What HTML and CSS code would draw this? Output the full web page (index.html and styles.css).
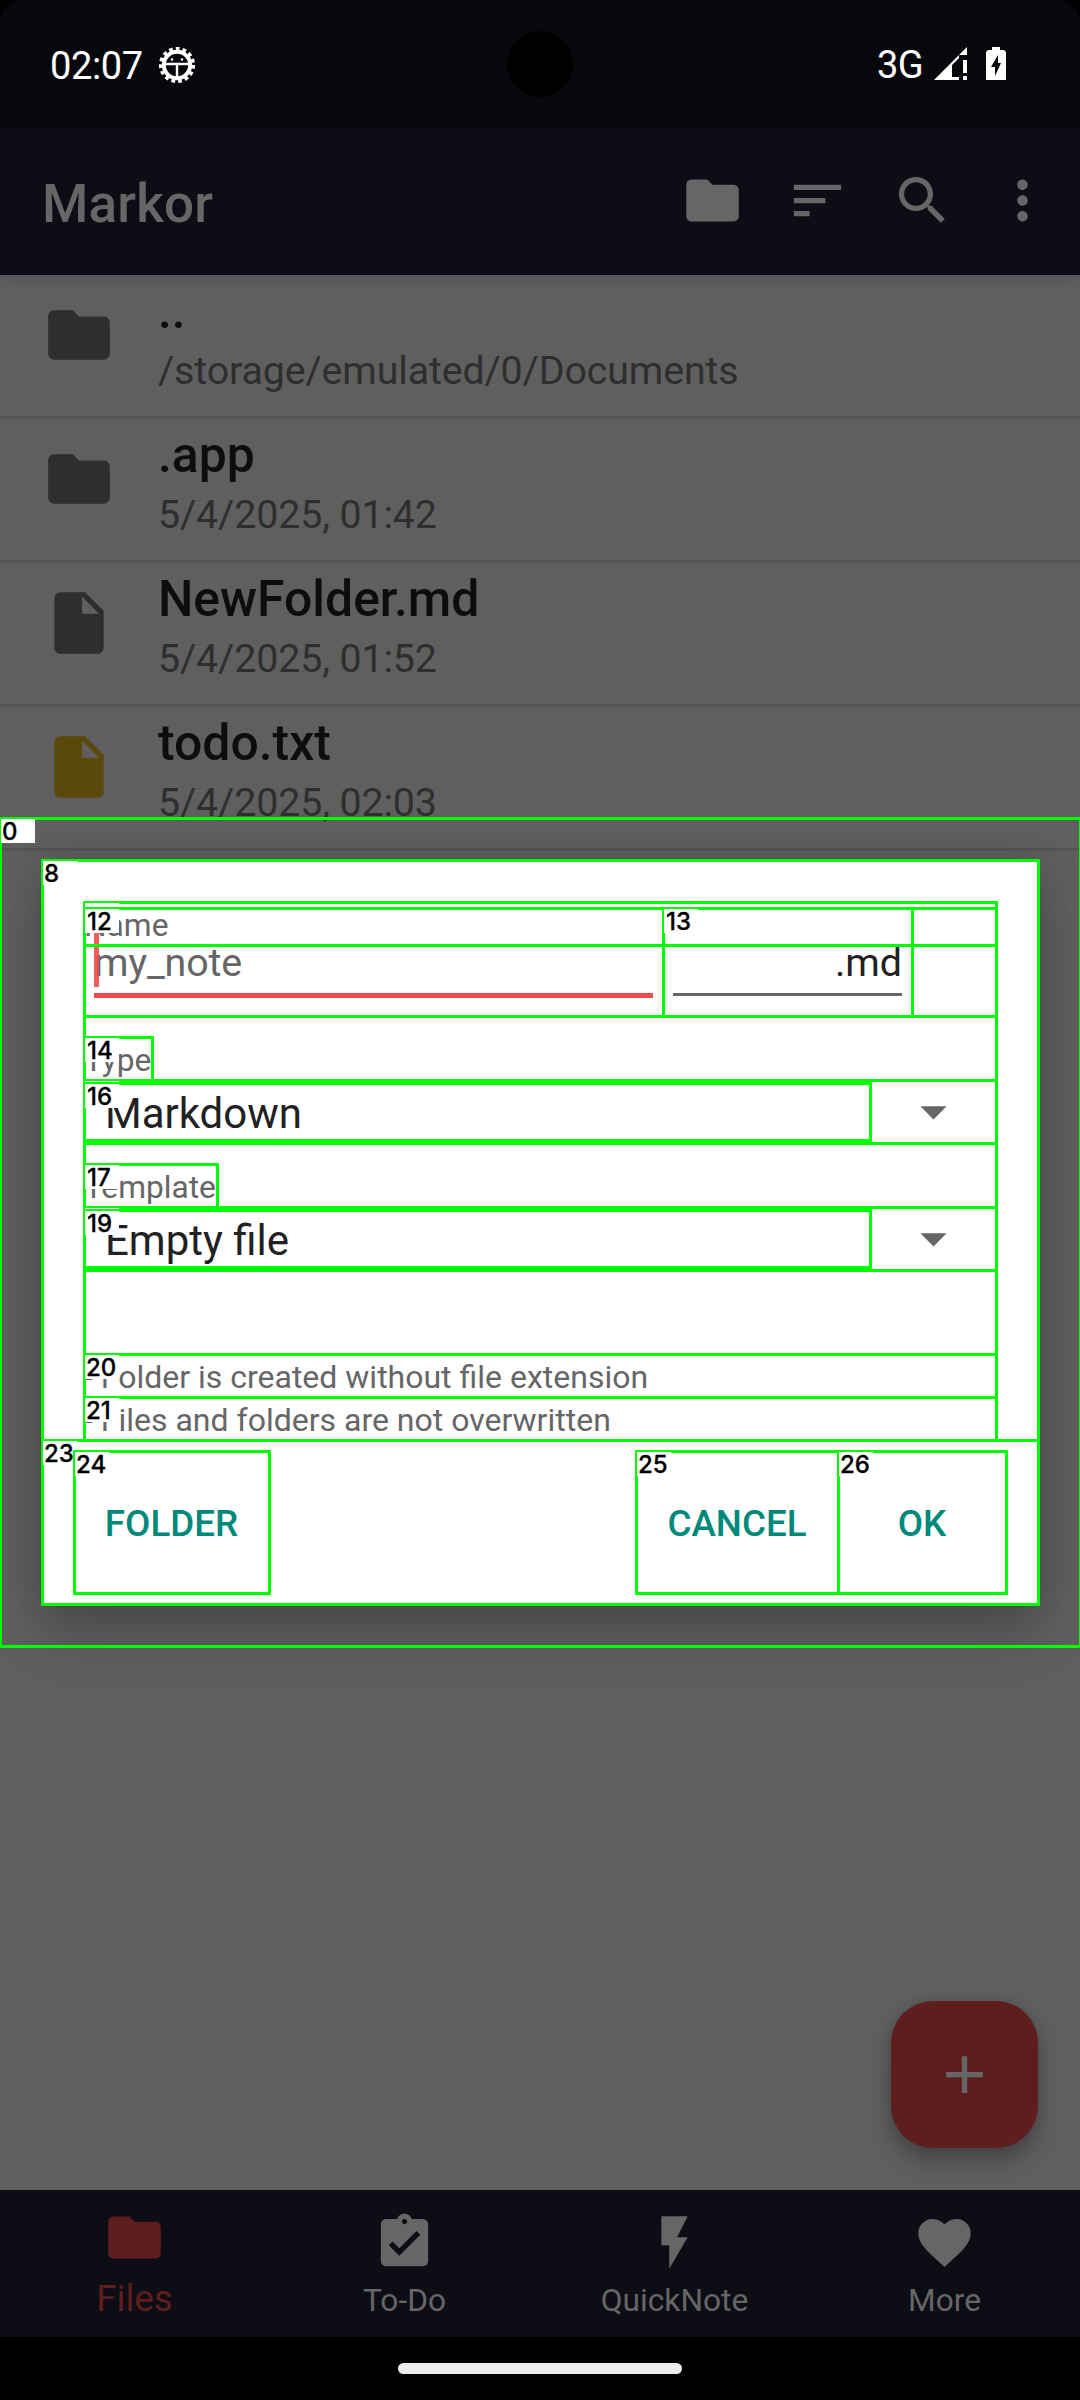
FILE: index.html
```html
<!DOCTYPE html>
<html lang="en">
<head>
<meta charset="utf-8">
<title>Markor</title>
<link rel="stylesheet" href="styles.css">
</head>
<body>
<div class="screen">
  <header class="status">
    <div class="status-left">
      <span class="clock">02:07</span>
      <svg class="bug" viewBox="-19 -19 38 38">
        <circle r="15.6" fill="none" stroke="#fff" stroke-width="5" stroke-dasharray="3.6 2.934"/>
        <circle r="13.2" fill="#07080c" stroke="#fff" stroke-width="4"/>
        <path d="M-12 -1H12M0 -1V12" stroke="#fff" stroke-width="2.400"/>
        <circle cx="-5" cy="-5.500" r="1.200" fill="#fff"/><circle cx="5" cy="-5.500" r="1.200" fill="#fff"/>
      </svg>
    </div>
    <span class="camera"></span>
    <div class="status-right">
      <span class="net">3G</span>
      <svg class="signal" viewBox="0 0 33 33" fill="#fff"><path d="M33 0V8H25ZM25 8V11L18 18V30H25V33H0ZM29 13H33V26H29ZM29 29H33V33H29Z"/></svg>
      <svg class="battery" viewBox="0 0 20 33" fill="#fff"><path fill-rule="evenodd" d="M6 0H14V3H18L20 5V33H0V5L2 3H6ZM12 8L5 20H9V29L15 16H12Z"/></svg>
    </div>
  </header>
  <div class="appbar">
    <h1 class="title">Markor</h1>
    <div class="actions">
      <svg class="icon" viewBox="0 0 24 24"><path d="M10 4H4c-1.1 0-2 .9-2 2v12c0 1.1.9 2 2 2h16c1.1 0 2-.9 2-2V8c0-1.100-.9-2-2-2h-8l-2-2z"/></svg>
      <svg class="icon" viewBox="0 0 24 24"><path d="M3 18h6v-2H3v2zM3 6v2h18V6H3zm0 7h12v-2H3v2z"/></svg>
      <svg class="icon" viewBox="0 0 24 24"><path d="M15.500 14h-.79l-.28-.27A6.471 6.471 0 0 0 16 9.500 6.500 6.500 0 1 0 9.500 16c1.610 0 3.090-.59 4.230-1.570l.27.28v.79l5 4.990L20.490 19l-4.990-5zm-6 0C7.010 14 5 11.990 5 9.500S7.010 5 9.500 5 14 7.010 14 9.500 11.990 14 9.500 14z"/></svg>
      <svg class="icon more" viewBox="0 0 24 24"><path d="M12 8c1.100 0 2-.9 2-2s-.9-2-2-2-2 .9-2 2 .9 2 2 2zm0 2c-1.100 0-2 .9-2 2s.9 2 2 2 2-.9 2-2-.9-2-2-2zm0 6c-1.100 0-2 .9-2 2s.9 2 2 2 2-.9 2-2-.9-2-2-2z"/></svg>
    </div>
  </div>
  <main class="files">
    <div class="row">
      <svg class="row-icon" viewBox="0 0 24 24"><path d="M10 4H4c-1.1 0-2 .9-2 2v12c0 1.1.9 2 2 2h16c1.1 0 2-.9 2-2V8c0-1.100-.9-2-2-2h-8l-2-2z"/></svg>
      <div class="row-text"><div class="name">..</div><div class="meta">/storage/emulated/0/Documents</div></div>
    </div>
    <div class="row">
      <svg class="row-icon" viewBox="0 0 24 24"><path d="M10 4H4c-1.1 0-2 .9-2 2v12c0 1.1.9 2 2 2h16c1.1 0 2-.9 2-2V8c0-1.100-.9-2-2-2h-8l-2-2z"/></svg>
      <div class="row-text"><div class="name">.app</div><div class="meta">5/4/2025, 01:42</div></div>
    </div>
    <div class="row">
      <svg class="row-icon" viewBox="0 0 24 24"><path d="M6 2c-1.100 0-1.990.9-1.990 2L4 20c0 1.100.89 2 1.990 2H18c1.100 0 2-.9 2-2V8l-6-6H6zm7 7V3.500L18.500 9H13z"/></svg>
      <div class="row-text"><div class="name">NewFolder.md</div><div class="meta">5/4/2025, 01:52</div></div>
    </div>
    <div class="row">
      <svg class="row-icon todo" viewBox="0 0 24 24"><path d="M6 2c-1.100 0-1.990.9-1.990 2L4 20c0 1.100.89 2 1.990 2H18c1.100 0 2-.9 2-2V8l-6-6H6zm7 7V3.500L18.500 9H13z"/></svg>
      <div class="row-text"><div class="name">todo.txt</div><div class="meta">5/4/2025, 02:03</div></div>
    </div>
  </main>
  <nav class="tabs">
    <div class="tab active">
      <svg class="icon" viewBox="0 0 24 24"><path d="M10 4H4c-1.1 0-2 .9-2 2v12c0 1.1.9 2 2 2h16c1.1 0 2-.9 2-2V8c0-1.100-.9-2-2-2h-8l-2-2z"/></svg>
      <span>Files</span>
    </div>
    <div class="tab">
      <svg class="icon" viewBox="0 0 24 24"><path d="M19 3h-4.180C14.400 1.840 13.300 1 12 1c-1.300 0-2.400.84-2.820 2H5c-1.100 0-2 .9-2 2v14c0 1.100.9 2 2 2h14c1.100 0 2-.9 2-2V5c0-1.100-.9-2-2-2zm-7 0c.55 0 1 .45 1 1s-.45 1-1 1-1-.45-1-1 .45-1 1-1zm-2 14l-4-4 1.410-1.410L10 14.170l6.590-6.590L18 9l-8 8z"/></svg>
      <span>To-Do</span>
    </div>
    <div class="tab">
      <svg class="icon" viewBox="0 0 24 24"><path d="M7 2v11h3v9l7-12h-4l4-8z"/></svg>
      <span>QuickNote</span>
    </div>
    <div class="tab">
      <svg class="icon" viewBox="0 0 24 24"><path d="M12 21.350l-1.450-1.320C5.400 15.360 2 12.280 2 8.500 2 5.420 4.420 3 7.500 3c1.740 0 3.410.81 4.500 2.090C13.090 3.810 14.760 3 16.500 3 19.580 3 22 5.420 22 8.500c0 3.780-3.400 6.860-8.550 11.540L12 21.350z"/></svg>
      <span>More</span>
    </div>
  </nav>
  <footer class="gesture"><span class="pill"></span></footer>

  <button class="fab"><svg class="icon" viewBox="0 0 24 24"><path d="M19 13h-6v6h-2v-6H5v-2h6V5h2v6h6v2z"/></svg></button>

  <section class="dialog">
    <div class="form">
      <div class="label first">Name</div>
      <div class="fields">
        <div class="field note"><span class="hint">my_note</span><i class="caret"></i></div>
        <div class="field ext"><span>.md</span></div>
      </div>
      <div class="label">Type</div>
      <div class="spinner"><span>Markdown</span><svg class="icon" viewBox="0 0 24 24"><path d="M7 10l5 5 5-5z"/></svg></div>
      <div class="label second">Template</div>
      <div class="spinner"><span>Empty file</span><svg class="icon" viewBox="0 0 24 24"><path d="M7 10l5 5 5-5z"/></svg></div>
      <div class="notes"><div>- Folder is created without file extension</div><div>- Files and folders are not overwritten</div></div>
    </div>
    <div class="buttons">
      <button class="btn folder">FOLDER</button>
      <button class="btn cancel">CANCEL</button>
      <button class="btn ok">OK</button>
    </div>
  </section>

  <div class="marks">
    <div class="mark m0"><b>0</b></div>
    <div class="mark m8"><b>8</b></div>
    <div class="mark m10"><b></b></div>
    <div class="mark m11"><b></b></div>
    <div class="mark name-box"></div>
    <div class="mark m12"><b>12</b></div>
    <div class="mark m13"><b>13</b></div>
    <div class="mark m14"><b>14</b></div>
    <div class="mark m15"><b></b></div>
    <div class="mark m16"><b>16</b></div>
    <div class="mark m17"><b>17</b></div>
    <div class="mark m18"><b></b></div>
    <div class="mark m19"><b>19</b></div>
    <div class="mark m20"><b>20</b></div>
    <div class="mark m21"><b>21</b></div>
    <div class="mark m23"><b>23</b></div>
    <div class="mark m24"><b>24</b></div>
    <div class="mark m25"><b>25</b></div>
    <div class="mark m26"><b>26</b></div>
  </div>
</div>
</body>
</html>
```
FILE: styles.css
```css
* { box-sizing: border-box; }
html, body { margin: 0; background: #000; }
body { font-family: Roboto, "Liberation Sans", sans-serif; }
.screen { position: relative; width: 1080px; height: 2400px; overflow: hidden; display: flex; flex-direction: column; background: #000; }
button { border: 0; padding: 0; margin: 0; background: none; font-family: inherit; }
svg { display: block; flex: none; }
.icon { width: 63px; height: 63px; fill: #666; }

.status { position: relative; height: 128px; flex: none; display: flex; justify-content: space-between; background: #07080c; border-radius: 22px 22px 0 0; color: #fff; padding: 0 74px 0 50px; }
.status-left, .status-right { display: flex; align-items: flex-start; }
.clock { font-size: 38px; line-height: 44px; margin-top: 44px; width: 108px; letter-spacing: -0.4px; }
.bug { width: 38px; height: 38px; margin-top: 46px; }
.camera { position: absolute; left: 507px; top: 31px; width: 66px; height: 66px; border-radius: 50%; background: #000; }
.net { font-size: 38px; line-height: 44px; margin-top: 43px; font-weight: 450; width: 57px; letter-spacing: -0.6px; }
.signal { width: 33px; height: 33px; margin-top: 47px; }
.battery { width: 20px; height: 33px; margin: 47px 0 0 19px; }

.appbar { position: relative; z-index: 1; height: 147px; flex: none; display: flex; justify-content: space-between; background: #0d0d15; padding: 0 26px 0 42px; box-shadow: 0 2px 14px rgba(0,0,0,.16); }
.title { margin: 45px 0 0; font-size: 53px; line-height: 62px; font-weight: 500; letter-spacing: .2px; color: #666; }
.actions { display: flex; gap: 42px; padding-top: 41px; }
.more { margin-left: -5px; }

.files { flex: 1; background: #5f5f5f; }
.row { height: 144px; border-bottom: 3px solid #545454; display: flex; padding-left: 42px; }
.row-icon { width: 74px; height: 74px; margin: 23px 42px 0 0; fill: #2e2e2e; }
.row-icon.todo { fill: #5b490c; }
.name { margin-top: 6px; font-size: 49.875px; line-height: 60px; font-weight: 500; color: #0d0d0d; }
.meta { margin-top: 6px; font-size: 39.375px; line-height: 48px; letter-spacing: -0.13px; color: #2e2e2e; white-space: nowrap; }

.tabs { height: 147px; flex: none; display: grid; grid-template-columns: repeat(4, 1fr); background: #0d0d15; }
.tab { display: flex; flex-direction: column; align-items: center; padding: 21px 1px 0 0; color: #666; font-size: 31.7px; line-height: 38px; }
.tab span { margin-top: 8px; }
.tab.active { color: #5f1e1e; padding-top: 16px; font-size: 36.75px; line-height: 44px; }
.tab.active .icon { fill: #5f1e1e; }
.gesture { height: 63px; flex: none; display: flex; justify-content: center; padding-top: 26px; }
.pill { width: 284px; height: 11px; border-radius: 6px; background: #ececec; }

.fab { position: absolute; left: 891px; top: 2001px; width: 147px; height: 147px; border-radius: 42px; background: #5f1e1e; display: flex; align-items: center; justify-content: center; box-shadow: 0 14px 22px rgba(0,0,0,.25), 0 0 12px rgba(0,0,0,.12); }

.dialog { position: absolute; left: 42px; top: 860px; width: 996px; height: 744px; background: #fff; border-radius: 4px; padding-top: 46px; display: flex; flex-direction: column; box-shadow: 0 28px 56px rgba(0,0,0,.22), 0 0 34px rgba(0,0,0,.1); }
.form { height: 534px; padding: 0 42px; }
.label { font-size: 31.7px; line-height: 43px; height: 42px; padding-top: 1px; color: #666; }
.label.first { line-height: 39px; height: 37px; padding: 0; }
.label.second { margin-top: 22px; }
.fields { display: flex; gap: 20px; height: 95px; padding-left: 10px; }
.field { position: relative; height: 55px; font-size: 39.375px; line-height: 40px; color: #212121; }
.note { width: 559px; border-bottom: 5px solid #f04a4a; }
.note .hint { color: #666; letter-spacing: -0.1px; }
.caret { position: absolute; left: 0; top: -15px; width: 5px; height: 59px; background: #f04a4a; opacity: .9; }
.ext { width: 229px; height: 53px; border-bottom: 3px solid #666; text-align: right; }
.spinner { height: 63px; display: flex; align-items: center; justify-content: space-between; padding: 0 31px 0 21px; font-size: 42px; line-height: 64px; color: #212121; }
.spinner span { padding-top: 4px; letter-spacing: normal; }
.notes { padding-top: 86px; font-size: 32px; line-height: 43px; color: #666; }
.buttons { height: 164px; display: flex; padding: 11px 32px; }
.btn { height: 142px; font-size: 36.75px; font-weight: 500; color: #00897b; padding-top: 2px; }
.folder { width: 195px; }
.cancel { width: 202px; margin-left: auto; }
.ok { width: 168px; }

.marks { position: absolute; inset: 0; }
.mark { position: absolute; border: 3px solid #0f0; border-radius: 1px; }
.mark b { position: absolute; left: -1px; top: -1px; width: 34px; height: 24px; background: #fff; color: #000; font: 500 24px/25px Inter, sans-serif; padding-left: 1px; -webkit-text-stroke: 0.3px #000; }
.m0 { left: -1px; top: 817px; width: 1083px; height: 831px; }
.m8 { left: 41px; top: 859px; width: 999px; height: 747px; }
.m10 { left: 83px; top: 901px; width: 915px; height: 541px; }
.m11 { left: 83px; top: 907px; width: 915px; height: 111px; }
.name-box { left: 83px; top: 907px; width: 915px; height: 40px; }
.m12 { left: 83px; top: 907px; width: 582px; height: 111px; }
.m13 { left: 662px; top: 907px; width: 252px; height: 111px; }
.m14 { left: 83px; top: 1036px; width: 71px; height: 46px; }
.m15 { left: 83px; top: 1079px; width: 915px; height: 66px; }
.m16 { left: 83px; top: 1082px; width: 789px; height: 60px; }
.m17 { left: 83px; top: 1163px; width: 136px; height: 46px; }
.m18 { left: 83px; top: 1206px; width: 915px; height: 66px; }
.m19 { left: 83px; top: 1209px; width: 789px; height: 60px; }
.m20 { left: 83px; top: 1353px; width: 915px; height: 46px; }
.m21 { left: 83px; top: 1396px; width: 915px; height: 46px; }
.m23 { left: 41px; top: 1439px; width: 999px; height: 167px; }
.m24 { left: 73px; top: 1450px; width: 198px; height: 145px; }
.m25 { left: 635px; top: 1450px; width: 205px; height: 145px; }
.m26 { left: 837px; top: 1450px; width: 171px; height: 145px; }
.m12 b, .m13 b, .m14 b, .m16 b, .m17 b, .m19 b { padding-left: 2px; }
```
